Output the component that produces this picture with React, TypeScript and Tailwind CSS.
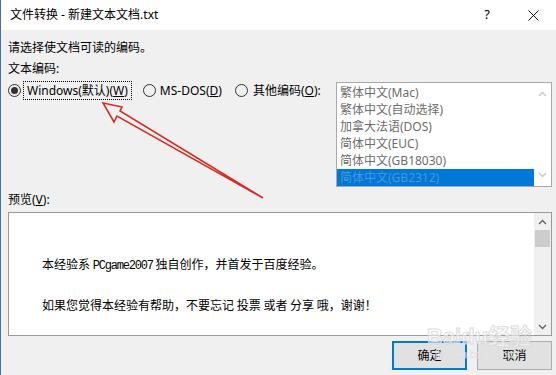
import React from 'react'

const ui = "font-['Noto_Sans','Noto_Sans_CJK_SC',sans-serif]"

function Radio({ checked }: { checked?: boolean }) {
  return (
    <span className="w-[13px] h-[13px] rounded-full border border-[#333333] flex items-center justify-center shrink-0">
      {checked && <span className="w-[7px] h-[7px] rounded-full bg-[#333333]" />}
    </span>
  )
}

function Chevron({ up, color }: { up?: boolean; color: string }) {
  return (
    <svg width="9" height="6" viewBox="0 0 9 6">
      <path d={up ? 'M1 5L4.5 1.5L8 5' : 'M1 1L4.5 4.5L8 1'} stroke={color} strokeWidth="1.3" fill="none" />
    </svg>
  )
}

const encodings = ['繁体中文(Mac)', '繁体中文(自动选择)', '加拿大法语(DOS)', '简体中文(EUC)', '简体中文(GB18030)', '简体中文(GB2312)']

export default function App() {
  return (
    <div className={`relative w-[556px] h-[375px] overflow-hidden bg-[#f0f0f0] border-l border-[#4a6f9c] text-[12px] text-black ${ui}`}>
      {/* title bar */}
      <div className="h-[30px] bg-white flex items-center">
        <span className="pl-[9px] leading-[16px]">文件转换 - 新建文本文档.txt</span>
        <div className="ml-auto flex h-full">
          <div className="w-[46px] flex items-center justify-center text-[13px]">?</div>
          <div className="w-[46px] flex items-center justify-center">
            <svg width="11" height="11" viewBox="0 0 11 11">
              <path d="M0.5 0.5L10.5 10.5M10.5 0.5L0.5 10.5" stroke="#111" strokeWidth="1" />
            </svg>
          </div>
        </div>
      </div>

      <div className="pl-[7px] pr-[4px] pt-[10px]">
        <div className="leading-[16px]">请选择使文档可读的编码。</div>
        <div className="leading-[16px] mt-[5px]">文本编码:</div>

        <div className="flex items-start mt-[4px]">
          <div className="flex items-center h-[19px]">
            <Radio checked />
            <span className="ml-[2px] h-[19px] px-[3px] border border-dotted border-black flex items-center leading-[16px]">
              Windows(默认)(<span className="underline">W</span>)
            </span>
            <span className="ml-[11px]"><Radio /></span>
            <span className="ml-[4px] leading-[16px]">
              MS-DOS(<span className="underline">D</span>)
            </span>
            <span className="ml-[13px]"><Radio /></span>
            <span className="ml-[5px] leading-[16px]">
              其他编码(<span className="underline">O</span>):
            </span>
          </div>

          <div className="ml-auto mt-[1px] w-[216px] h-[105px] bg-white border border-[#a9a9a9] flex">
            <div className="flex-1 pt-[1px]">
              {encodings.map((e, i) => (
                <div
                  key={e}
                  className={`h-[17px] pl-[3px] leading-[17px] ${i === 5 ? 'bg-[#0078d7] text-[#4d95d8]' : 'text-[#6d6d6d]'}`}
                >
                  {e}
                </div>
              ))}
            </div>
            <div className="w-[17px] flex flex-col items-center justify-between py-[8px]">
              <Chevron up color="#c8c8c8" />
              <Chevron color="#c8c8c8" />
            </div>
          </div>
        </div>

        <div className="leading-[16px] mt-[5px]">
          预览(<span className="underline">V</span>):
        </div>

        <div className="mt-[4px] h-[124px] bg-white border border-[#9a9a9a] flex">
          <div className="flex-1 pt-[43px] pl-[33px] font-['Noto_Sans_CJK_SC',sans-serif] text-[12px]">
            <div className="leading-[16px]">
              本经验系 <span className="font-['Liberation_Mono',monospace] tracking-[-1.2px]">PCgame2007</span> 独自创作，并首发于百度经验。
            </div>
            <div className="leading-[16px] mt-[23px]">如果您觉得本经验有帮助，不要忘记 投票 或者 分享 哦，谢谢！</div>
          </div>
          <div className="w-[17px] bg-[#f0f0f0] flex flex-col items-center">
            <div className="h-[17px] flex items-center justify-center">
              <Chevron up color="#606060" />
            </div>
            <div className="w-[15px] h-[17px] bg-[#cdcdcd]" />
            <div className="mt-auto h-[17px] flex items-center justify-center">
              <Chevron color="#606060" />
            </div>
          </div>
        </div>

        <div className="mt-[5px] flex justify-end gap-[10px]">
          <button className="w-[75px] h-[29px] bg-[#e1e1e1] border-2 border-[#0078d7] text-[12px]">确定</button>
          <button className="w-[75px] h-[29px] bg-[#e1e1e1] border border-[#adadad] text-[12px]">取消</button>
        </div>
      </div>

      {/* red annotation arrow */}
      <svg className="absolute left-0 top-0 pointer-events-none" width="556" height="375" viewBox="0 0 556 375">
        <polygon
          points="102,103 121,107 119,111 262,198 116,116 113,122"
          fill="none"
          stroke="#d62c24"
          strokeWidth="1.6"
          strokeLinejoin="miter"
        />
      </svg>

      {/* watermark */}
      <div className="absolute left-[426px] top-[325px] pointer-events-none flex flex-col items-start">
        <span className="text-[22px] leading-[24px] font-bold text-white/50 [-webkit-text-stroke:1px_#dcdcdc] font-['Liberation_Sans','Noto_Sans_CJK_SC',sans-serif]">
          Baidu经验
        </span>
        <span className="text-[10px] leading-[11px] ml-[8px] text-white/40 [-webkit-text-stroke:0.4px_#dddddd] font-['Liberation_Sans',sans-serif]">
          jingyan.baidu.com
        </span>
      </div>
    </div>
  )
}
